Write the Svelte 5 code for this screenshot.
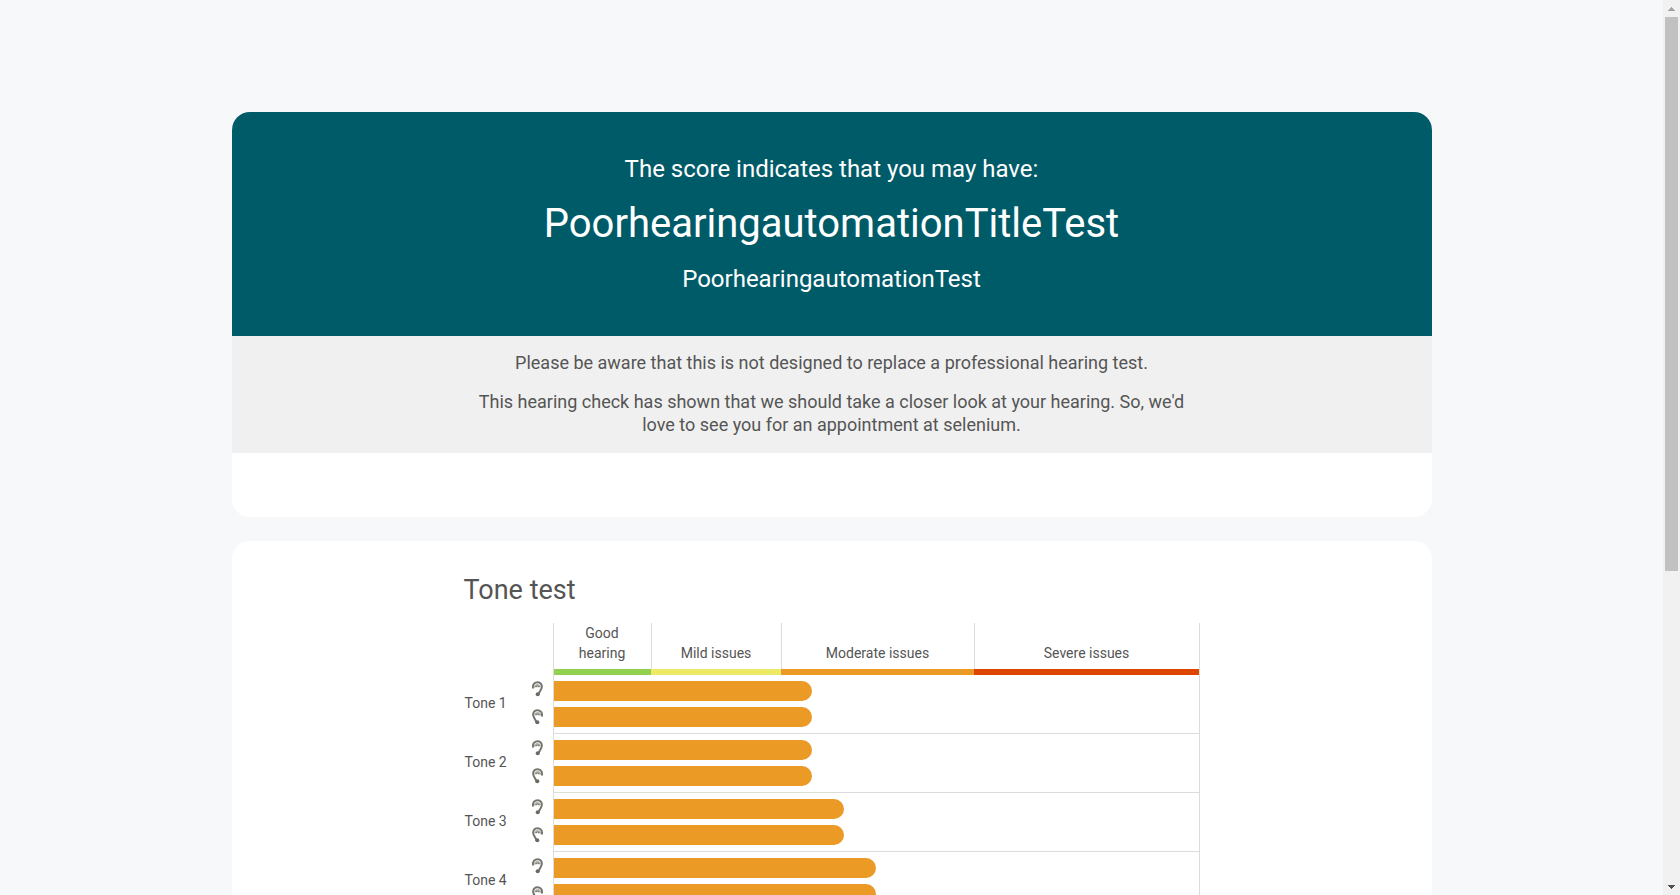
<script>
  const levels = [
    { name: 'Good hearing', share: 97, color: '#92d050' },
    { name: 'Mild issues', share: 130, color: '#ecea66' },
    { name: 'Moderate issues', share: 193, color: '#eb9b25' },
    { name: 'Severe issues', share: 225, color: '#de4500' }
  ];
  const tones = [
    { name: 'Tone 1', left: 40, right: 40 },
    { name: 'Tone 2', left: 40, right: 40 },
    { name: 'Tone 3', left: 45, right: 45 },
    { name: 'Tone 4', left: 50, right: 50 }
  ];
  const columns = levels.map((l) => `${l.share}fr`).join(' ');
</script>

{#snippet ear(mirrored)}
  <svg class="ear" class:mirrored viewBox="0 0 33 48" aria-hidden="true">
    <path d="M3 20 C2 9 8 4 17 4 C26 4 31 11 29 20 C28 27 23 30 19 41" fill="none" stroke="#75756e" stroke-width="6" stroke-linecap="round" />
    <path d="M7 20 C9 9 22 8 25 18" fill="none" stroke="#b4b4ad" stroke-width="4" />
    <path d="M11 19 C13 13 20 13 22 19" fill="none" stroke="#75756e" stroke-width="4" />
    <circle cx="17" cy="40" r="6" fill="#6b6b64" />
  </svg>
{/snippet}

<div class="shell">
  <main class="page">
    <section class="card">
      <header class="result">
        <p>The score indicates that you may have:</p>
        <h1>PoorhearingautomationTitleTest</h1>
        <p>PoorhearingautomationTest</p>
      </header>
      <div class="notice">
        <p>Please be aware that this is not designed to replace a professional hearing test.</p>
        <p>This hearing check has shown that we should take a closer look at your hearing. So, we'd love to see you for an appointment at selenium.</p>
      </div>
    </section>

    <section class="card tone-card">
      <div class="tone">
        <h2>Tone test</h2>
        <div class="row">
          <div class="side"></div>
          <div class="plot levels" style:grid-template-columns={columns}>
            {#each levels as level}
              <div class="level" style:--level={level.color}><span>{level.name}</span></div>
            {/each}
          </div>
        </div>
        {#each tones as tone}
          <div class="row">
            <div class="side">
              <span>{tone.name}</span>
              <div class="ears">
                {@render ear(false)}
                {@render ear(true)}
              </div>
            </div>
            <div class="plot bars">
              <div class="bar" style:width="{tone.left}%"></div>
              <div class="bar" style:width="{tone.right}%"></div>
            </div>
          </div>
        {/each}
      </div>
    </section>
  </main>

  <div class="scroll" aria-hidden="true">
    <svg class="arrow" viewBox="0 0 17 17" shape-rendering="crispEdges"><path d="M5 11h7v-1h-1v-1h-1v-1h-1v-1h-1v1h-1v1h-1v1h-1z" fill="#a3a3a3" /></svg>
    <div class="track"><div class="thumb"></div></div>
    <svg class="arrow" viewBox="0 0 17 17" shape-rendering="crispEdges"><path d="M5 7h7v1h-1v1h-1v1h-1v1h-1v-1h-1v-1h-1v-1h-1z" fill="#505050" /></svg>
  </div>
</div>

<style>
  :global(body) {
    margin: 0;
    background: #f6f8fa;
    color: #555;
    font-family: Roboto, sans-serif;
  }
  .shell {
    display: grid;
    grid-template-columns: minmax(0, 1fr) 17px;
    height: 100vh;
    overflow: hidden;
  }
  .page {
    display: flex;
    flex-direction: column;
    align-items: center;
    gap: 24px;
    padding-top: 112px;
  }
  .card {
    width: 100%;
    max-width: 1200px;
    flex: none;
    background: #fff;
    border-radius: 18px;
    overflow: hidden;
    padding-bottom: 64px;
  }
  h1, h2, p {
    margin: 0;
    font-weight: 400;
  }
  .result {
    display: flex;
    flex-direction: column;
    gap: 16px;
    padding: 43px 24px;
    background: #005b69;
    color: #fff;
    text-align: center;
    font-size: 24px;
    line-height: 28px;
  }
  h1 {
    font-size: 40px;
    line-height: 50px;
  }
  .notice {
    display: flex;
    flex-direction: column;
    align-items: center;
    gap: 16px;
    padding: 15px 16px 17px;
    background: #f0f0f0;
    text-align: center;
    font-size: 18px;
    line-height: 23px;
  }
  .notice p {
    max-width: 736px;
  }
  .tone-card {
    padding-top: 32px;
  }
  .tone {
    max-width: 736px;
    margin: 0 auto;
    font-size: 14px;
    line-height: 20px;
  }
  h2 {
    margin-bottom: 16px;
    font-size: 27px;
    line-height: 34px;
  }
  .row {
    display: grid;
    grid-template-columns: 89px minmax(0, 1fr);
  }
  .side {
    display: flex;
    align-items: center;
    justify-content: space-between;
    padding: 0 10px 3px 1px;
  }
  .ears {
    display: flex;
    flex-direction: column;
    gap: 12px;
  }
  .ear {
    display: block;
    width: 11px;
    height: 16px;
  }
  .mirrored {
    transform: scaleX(-1);
  }
  .plot {
    border: solid #dcdcdc;
    border-width: 0 1px;
  }
  .levels {
    display: grid;
  }
  .level {
    display: flex;
    flex-direction: column;
    text-align: center;
  }
  .level span {
    flex: 1;
    display: flex;
    align-items: flex-end;
    justify-content: center;
    padding: 0 16px 6px;
  }
  .level + .level span {
    border-left: 1px solid #dcdcdc;
  }
  .level::after {
    content: '';
    height: 6px;
    background: var(--level);
  }
  .bars {
    display: flex;
    flex-direction: column;
    gap: 6px;
    padding: 6px 0;
    border-bottom-width: 1px;
  }
  .bar {
    height: 20px;
    border-radius: 0 10px 10px 0;
    background: #eb9b25;
  }
  .scroll {
    display: flex;
    flex-direction: column;
    height: 100vh;
    background: #f1f1f1;
  }
  .arrow {
    display: block;
    flex: none;
    width: 17px;
    height: 17px;
  }
  .track {
    flex: 1;
    padding: 0 2px;
  }
  .thumb {
    height: 64.4%;
    background: #c1c1c1;
  }
</style>
